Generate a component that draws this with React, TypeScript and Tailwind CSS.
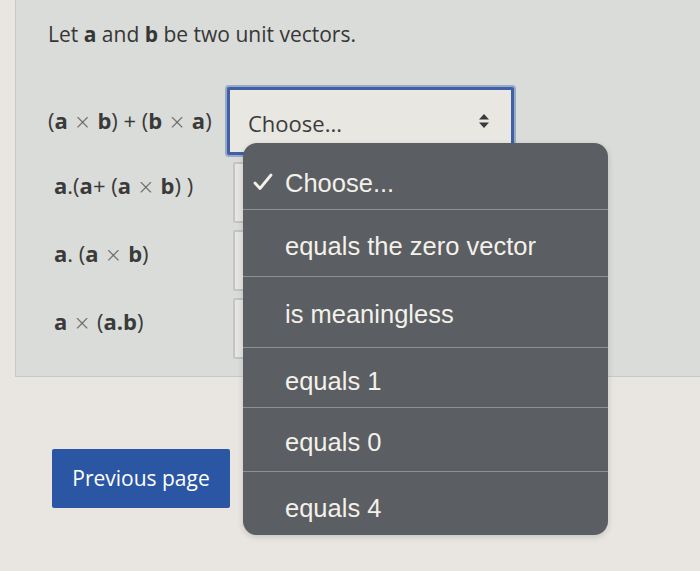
import React from "react";

const B = ({ children }: { children: React.ReactNode }) => (
  <span className="font-bold">{children}</span>
);

const X = () => (
  <span className="mx-[6px] font-['DejaVu_Sans',sans-serif] text-[21px] font-light text-[#666]">×</span>
);

const rows: { label: React.ReactNode }[] = [
  {
    label: (
      <>
        (<B>a</B>
        <X />
        <B>b</B>) + (<B>b</B>
        <X />
        <B>a</B>)
      </>
    ),
  },
  {
    label: (
      <>
        <B>a</B>.(<B>a</B>+ (<B>a</B>
        <X />
        <B>b</B>) )
      </>
    ),
  },
  {
    label: (
      <>
        <B>a</B>. (<B>a</B>
        <X />
        <B>b</B>)
      </>
    ),
  },
  {
    label: (
      <>
        <B>a</B>
        <X />
        (<B>a.b</B>)
      </>
    ),
  },
];

const options = [
  { text: "Choose...", h: "h-[66px] pt-[14px]" },
  { text: "equals the zero vector", h: "h-[67px] pt-[6px]" },
  { text: "is meaningless", h: "h-[71px] pt-[4px]" },
  { text: "equals 1", h: "h-[60px] pt-[8px]" },
  { text: "equals 0", h: "h-[64px] pt-[6px]" },
  { text: "equals 4", h: "h-[64px] pt-[10px]" },
];

function UpDown() {
  return (
    <svg width="10" height="14" viewBox="0 0 10 14" className="text-[#3a3a3a]">
      <path d="M5 0 L10 5.5 H0 Z" fill="currentColor" />
      <path d="M5 14 L10 8.5 H0 Z" fill="currentColor" />
    </svg>
  );
}

export default function App() {
  return (
    <div className="relative w-[700px] h-[571px] overflow-hidden bg-[#e9e5e1] font-['Open_Sans',sans-serif]">
      {/* question panel */}
      <div className="ml-[15px] h-[377px] bg-[#dadcd9] border-l border-b border-[#c7c9c6] pl-[32px] pt-[20px] text-[#363636]">
        <p className="text-[21px] leading-[28px] mb-[39px]">
          Let <B>a</B> and <B>b</B> be two unit vectors.
        </p>

        <div className="flex flex-col gap-[7px]">
          {rows.map((row, i) => (
            <div key={i} className="flex items-center">
              <div
                className={`w-[179px] text-[22px] whitespace-nowrap text-[#3a3a3a] ${i === 0 ? "" : "mb-[12px] pl-[6px]"}`}
              >
                {row.label}
              </div>
              {i === 0 ? (
                <div className="flex items-center justify-between w-[287px] h-[68px] border-[3px] border-[#3f5fa6] ring-2 ring-[#9aa9c4] rounded-[2px] bg-[#e9e7e2] pl-[18px] pr-[22px]">
                  <span className="text-[22px] text-[#3b3b3b] mt-[4px]">Choose...</span>
                  <UpDown />
                </div>
              ) : (
                <div className="ml-[6px] w-[280px] h-[61px] border-[2px] border-[#c4c4c2] rounded-[2px] bg-[#e6e5e1]" />
              )}
            </div>
          ))}
        </div>
      </div>

      <button className="mt-[72px] ml-[52px] w-[178px] h-[59px] bg-[#2b56a4] rounded-[2px] text-white text-[21px]">
        Previous page
      </button>

      {/* open select menu */}
      <div className="absolute left-[243px] top-[143px] w-[365px] h-[392px] rounded-[14px] bg-[#5b5e62] flex flex-col overflow-hidden font-['Liberation_Sans',sans-serif] text-[25.5px] text-[#f3f1ea] shadow-[0_2px_6px_rgba(0,0,0,0.15)]">
        {options.map((opt, i) => (
          <div
            key={opt.text}
            className={`${opt.h} shrink-0 flex items-center pl-[42px] relative ${i > 0 ? "border-t border-[#8e9093]" : ""}`}
          >
            {i === 0 && (
              <svg width="20" height="18" viewBox="0 0 20 18" className="absolute left-[10px] top-[30px]">
                <path d="M2 10 L7 15.5 L18 2" fill="none" stroke="#f3f1ea" strokeWidth="2.8" strokeLinecap="round" strokeLinejoin="round" />
              </svg>
            )}
            {opt.text}
          </div>
        ))}
      </div>
    </div>
  );
}
